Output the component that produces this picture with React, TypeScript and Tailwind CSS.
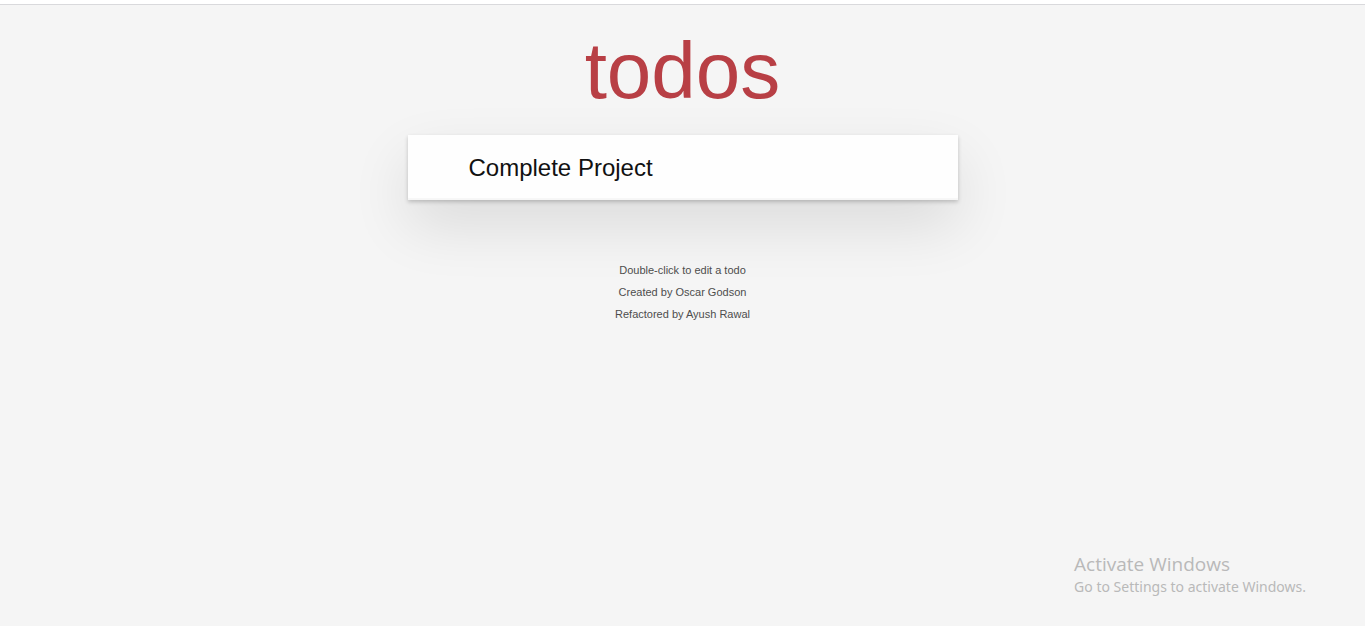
export default function App() {
  return (
    <div className="relative flex min-h-screen flex-col bg-[#f5f5f5] font-['Liberation_Sans',Arial,sans-serif] text-[#111111]">
      <div className="h-[5px] border-b border-[#d9d9dc] bg-white" />
      <main className="mx-auto w-full max-w-[550px]">
        <header>
          <h1 className="h-[130px] pt-[20px] text-center text-[80px] leading-[92px] font-extralight text-[#b83f45]">todos</h1>
          <input
            aria-label="New todo"
            defaultValue="Complete Project"
            className="block h-[65px] w-full bg-[#fefefe] pr-4 pl-[61px] text-[24px] leading-[34px] shadow-[inset_0_-2px_1px_rgba(0,0,0,0.03),0_2px_4px_0_rgba(0,0,0,0.2),0_25px_60px_0_rgba(0,0,0,0.11)] outline-none"
          />
        </header>
      </main>
      <footer className="mt-[59px] text-center text-[11px] leading-[22px] text-[#4d4d4d]">
        <p>Double-click to edit a todo</p>
        <p>Created by Oscar Godson</p>
        <p>Refactored by Ayush Rawal</p>
      </footer>
      <aside className="absolute right-[59px] bottom-[29px] text-[#b9b9b9]">
        <p className="font-['Open_Sans',sans-serif] text-[19px] leading-[26px]">Activate Windows</p>
        <p className="font-['Noto_Sans',sans-serif] text-[14px] leading-[20px]">Go to Settings to activate Windows.</p>
      </aside>
    </div>
  );
}
